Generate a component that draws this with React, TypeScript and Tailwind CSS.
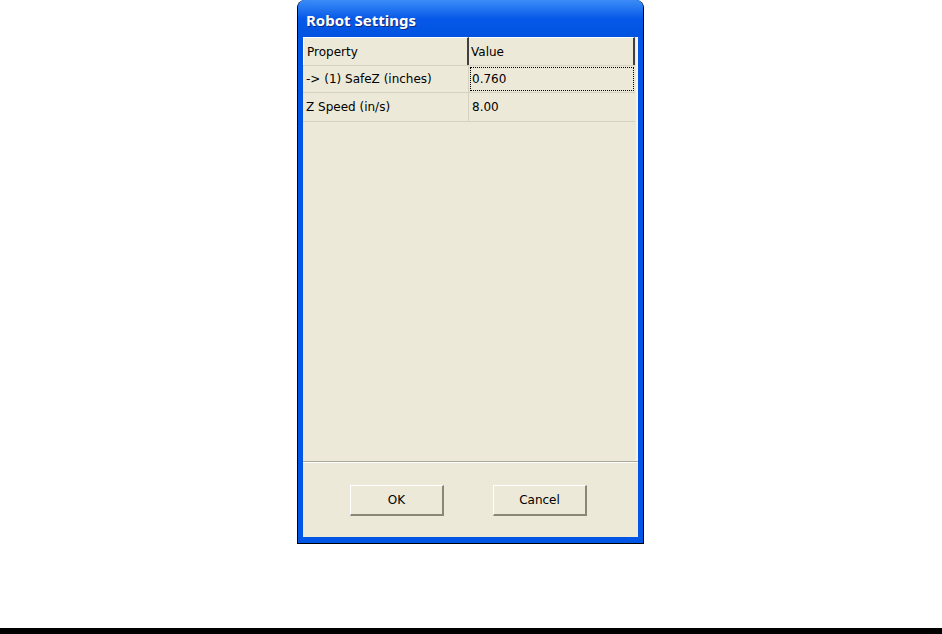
const rows = [
  { name: '-> (1) SafeZ (inches)', value: '0.760', focused: true },
  { name: 'Z Speed (in/s)', value: '8.00', focused: false },
];

function XpButton({ label }: { label: string }) {
  return (
    <button
      type="button"
      className="h-[31px] w-[94px] border-t border-l border-t-white border-l-white border-r-2 border-b-2 border-r-[#8a8778] border-b-[#8a8778] bg-[#ece9d8] text-[12px] text-black"
    >
      {label}
    </button>
  );
}

export default function App() {
  return (
    <div
      className="flex h-[634px] w-[942px] flex-col bg-white"
      style={{ fontFamily: '"DejaVu Sans", "Liberation Sans", sans-serif' }}
    >
      <div className="ml-[297px] flex h-[544px] w-[347px] flex-col rounded-t-[8px] border-x border-b border-black bg-[#0055e5]">
        <div className="flex h-[37px] items-center rounded-t-[7px] bg-gradient-to-b from-[#3b8cf7] via-[#0659e8] to-[#0052df] pt-[4px] pl-[8px]">
          <span
            className="text-[15px] font-bold text-white"
            style={{ fontFamily: '"Noto Sans", "DejaVu Sans", sans-serif', textShadow: '1px 1px 0 #0a2a7a' }}
          >
            Robot Settings
          </span>
        </div>
        <div className="flex flex-1 flex-col px-[5px] pb-[6px]">
          <div className="flex flex-1 flex-col bg-[#ece9d8]">
            <div className="flex h-[424px] flex-col border-r-2 border-r-[#f5f4ee]">
              <div className="flex h-[28px] w-[332px] text-[12px] text-black">
                <div className="flex w-[166px] items-center border-t border-l border-white border-r-2 border-r-[#404040] pl-[3px]">
                  Property
                </div>
                <div className="flex w-[166px] items-center border-t border-white border-r-2 border-r-[#404040] pl-[2px]">
                  Value
                </div>
              </div>
              {rows.map((row, i) => (
                <div
                  key={row.name}
                  className={`flex w-[332px] border-y border-[#d6d2c2] text-[12px] text-black ${i === 0 ? 'h-[28px]' : 'h-[29px] border-t-0'}`}
                >
                  <div className="flex w-[166px] items-center border-r border-[#d6d2c2] pl-[3px]">{row.name}</div>
                  <div className="flex w-[166px] p-px">
                    <div
                      className={`flex flex-1 items-center pl-px ${row.focused ? 'border border-dotted border-black' : 'border border-transparent'}`}
                    >
                      {row.value}
                    </div>
                  </div>
                </div>
              ))}
            </div>
            <div className="border-t border-b border-t-[#aca899] border-b-white" />
            <div className="flex gap-[49px] pt-[22px] pl-[47px]">
              <XpButton label="OK" />
              <XpButton label="Cancel" />
            </div>
          </div>
        </div>
      </div>
      <div className="flex-1" />
      <div className="h-[6px] bg-black" />
    </div>
  );
}
